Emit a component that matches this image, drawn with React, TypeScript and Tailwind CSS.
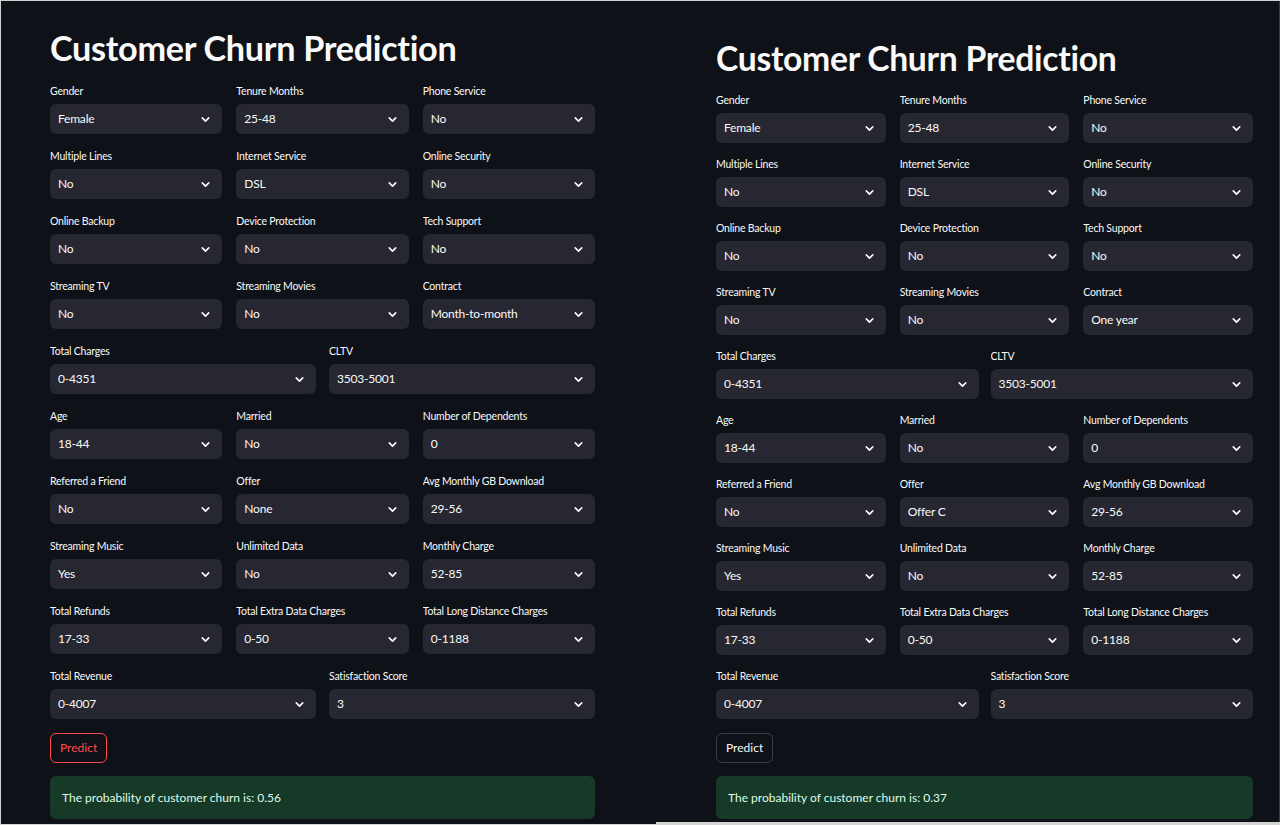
import { ChevronDown } from "lucide-react";

type Field = { label: string; value: string };

const leftRows: Field[][] = [
  [
    { label: "Gender", value: "Female" },
    { label: "Tenure Months", value: "25-48" },
    { label: "Phone Service", value: "No" },
  ],
  [
    { label: "Multiple Lines", value: "No" },
    { label: "Internet Service", value: "DSL" },
    { label: "Online Security", value: "No" },
  ],
  [
    { label: "Online Backup", value: "No" },
    { label: "Device Protection", value: "No" },
    { label: "Tech Support", value: "No" },
  ],
  [
    { label: "Streaming TV", value: "No" },
    { label: "Streaming Movies", value: "No" },
    { label: "Contract", value: "Month-to-month" },
  ],
  [
    { label: "Total Charges", value: "0-4351" },
    { label: "CLTV", value: "3503-5001" },
  ],
  [
    { label: "Age", value: "18-44" },
    { label: "Married", value: "No" },
    { label: "Number of Dependents", value: "0" },
  ],
  [
    { label: "Referred a Friend", value: "No" },
    { label: "Offer", value: "None" },
    { label: "Avg Monthly GB Download", value: "29-56" },
  ],
  [
    { label: "Streaming Music", value: "Yes" },
    { label: "Unlimited Data", value: "No" },
    { label: "Monthly Charge", value: "52-85" },
  ],
  [
    { label: "Total Refunds", value: "17-33" },
    { label: "Total Extra Data Charges", value: "0-50" },
    { label: "Total Long Distance Charges", value: "0-1188" },
  ],
  [
    { label: "Total Revenue", value: "0-4007" },
    { label: "Satisfaction Score", value: "3" },
  ],
];

// second run: same form, two answers changed
const rightRows: Field[][] = leftRows.map((row) =>
  row.map((f) => {
    if (f.label === "Contract") return { ...f, value: "One year" };
    if (f.label === "Offer") return { ...f, value: "Offer C" };
    return f;
  })
);

function Select({ label, value }: Field) {
  return (
    <div className="flex flex-col min-w-0">
      <div className="text-[10.5px] leading-[20px] tracking-[-0.2px] text-[#fafafa] mb-[3px] truncate">
        {label}
      </div>
      <div className="h-[30px] rounded-md bg-[#262730] flex items-center justify-between pl-2 pr-[10px]">
        <span className="text-[12px] tracking-[-0.2px] text-[#fafafa]">{value}</span>
        <ChevronDown className="w-[13px] h-[13px] text-[#fafafa]" strokeWidth={3} />
      </div>
    </div>
  );
}

function Panel({
  rows,
  result,
  danger,
  wide,
}: {
  rows: Field[][];
  result: string;
  danger: boolean;
  wide: boolean;
}) {
  return (
    <div className={wide ? "w-[545px]" : "w-[537px]"}>
      <h1
        className={
          "font-bold text-[#fafafa] leading-[44px] tracking-[-0.3px] " +
          (wide ? "text-[34.2px] pt-[25px] mb-[11px]" : "text-[33.7px] pt-[35px] mb-[10px]")
        }
      >
        Customer Churn Prediction
      </h1>
      <div className={wide ? "flex flex-col gap-[12px]" : "flex flex-col gap-[11px]"}>
        {rows.map((row, i) => (
          <div
            key={i}
            className={
              row.length === 3
                ? "grid grid-cols-3 gap-[14px]"
                : wide
                ? "grid grid-cols-2 gap-[13px]"
                : "grid grid-cols-2 gap-[12px]"
            }
          >
            {row.map((f) => (
              <Select key={f.label} {...f} />
            ))}
          </div>
        ))}
      </div>
      <button
        className={
          "mt-[14px] h-[30px] px-[9px] rounded-md border text-[12px] bg-[#0e1117] " +
          (danger ? "border-[#ff4b4b] text-[#ff4b4b]" : "border-[#3a3d44] text-[#fafafa]")
        }
      >
        Predict
      </button>
      <div className="mt-[13px] h-[43px] rounded-md bg-[#173928] flex items-center px-3 text-[12px] text-[#dffde9]">
        The probability of customer churn is: {result}
      </div>
    </div>
  );
}

export default function App() {
  return (
    <div
      className="w-[1280px] h-[825px] bg-[#d4d4d4] flex border-t border-[#cfcfcf] overflow-hidden"
      style={{ fontFamily: "Lato, 'Noto Sans', sans-serif" }}
    >
      <div className="w-[656px] h-[823px] bg-[#0e1117] border-l border-[#cfcfcf] pl-[49px]">
        <Panel rows={leftRows} result="0.56" danger wide />
      </div>
      <div className="flex-1 h-[821px] bg-[#0e1117] border-r border-[#3a3a3a] pl-[60px]">
        <Panel rows={rightRows} result="0.37" danger={false} wide={false} />
      </div>
    </div>
  );
}
